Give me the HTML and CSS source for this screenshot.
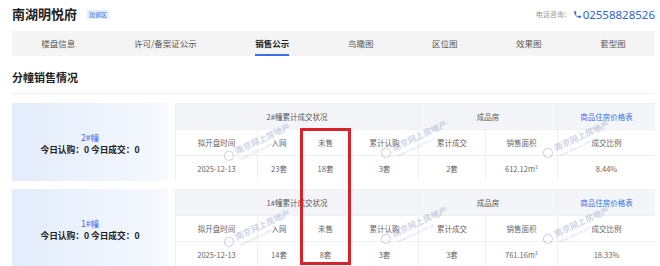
FILE: index.html
```html
<!DOCTYPE html>
<html lang="zh-CN">
<head>
  <meta charset="UTF-8">
  <meta name="viewport" content="width=device-width, initial-scale=1.0">
  <title>南湖明悦府 - 销售公示</title>
  <link rel="stylesheet" href="styles.css">
</head>
<body>
  <div class="page">
    <header class="top">
      <div class="name">
        <h1>南湖明悦府</h1>
        <span class="tag">建邺区</span>
      </div>
      <div class="phone">
        <span class="label">电话咨询：</span>
        <svg class="phone-icon" viewBox="0 0 24 24" width="9" height="9">
          <path d="M6.6 10.8c1.4 2.8 3.8 5.1 6.6 6.6l2.2-2.2c.3-.3.7-.4 1-.2 1.1.4 2.300.6 3.6.6.6 0 1 .4 1 1V20c0 .6-.4 1-1 1C10.6 21 3 13.4 3 4c0-.6.4-1 1-1h3.5c.6 0 1 .4 1 1 0 1.3.2 2.5.6 3.6.1.3 0 .7-.2 1l-2.3 2.2z" fill="#2f64d6"/>
        </svg>
        <span class="num">02558828526</span>
      </div>
    </header>

    <nav class="tabs">
      <a href="#">楼盘信息</a>
      <a href="#">许可/备案证公示</a>
      <a href="#" class="active">销售公示</a>
      <a href="#">鸟瞰图</a>
      <a href="#">区位图</a>
      <a href="#">效果图</a>
      <a href="#">套型图</a>
    </nav>

    <h2 class="section">分幢销售情况</h2>

    <div class="list">
      <!-- 2#幢 -->
      <div class="building">
        <div class="card">
          <div class="bname">2#幢</div>
          <div class="today">今日认购：0 今日成交：0</div>
        </div>
        <div class="stats-wrap">
          <table class="stats">
            <colgroup>
              <col style="width:82px"><col style="width:43px"><col style="width:50px"><col style="width:68px">
              <col style="width:67px"><col style="width:72px"><col style="width:98px">
            </colgroup>
            <tr class="head">
              <td colspan="4">2#幢累计成交状况</td>
              <td colspan="2">成品房</td>
              <td class="link">商品住房价格表</td>
            </tr>
            <tr>
              <td>拟开盘时间</td><td>入网</td><td>未售</td><td>累计认购</td>
              <td>累计成交</td><td>销售面积</td><td>成交比例</td>
            </tr>
            <tr>
              <td>2025-12-13</td><td>23套</td><td>18套</td><td>3套</td>
              <td>2套</td><td>612.12m²</td><td>8.44%</td>
            </tr>
          </table>
          <div class="mark m1"><i></i>南京网上房地产<small>www.njhouse.com.cn</small></div>
          <div class="mark m2"><i></i>南京网上房地产<small>www.njhouse.com.cn</small></div>
          <div class="mark m3"><i></i>南京网上房地产<small>www.njhouse.com.cn</small></div>
        </div>
      </div>

      <!-- 1#幢 -->
      <div class="building">
        <div class="card">
          <div class="bname">1#幢</div>
          <div class="today">今日认购：0 今日成交：0</div>
        </div>
        <div class="stats-wrap">
          <table class="stats">
            <colgroup>
              <col style="width:82px"><col style="width:43px"><col style="width:50px"><col style="width:68px">
              <col style="width:67px"><col style="width:72px"><col style="width:98px">
            </colgroup>
            <tr class="head">
              <td colspan="4">1#幢累计成交状况</td>
              <td colspan="2">成品房</td>
              <td class="link">商品住房价格表</td>
            </tr>
            <tr>
              <td>拟开盘时间</td><td>入网</td><td>未售</td><td>累计认购</td>
              <td>累计成交</td><td>销售面积</td><td>成交比例</td>
            </tr>
            <tr>
              <td>2025-12-13</td><td>14套</td><td>8套</td><td>3套</td>
              <td>3套</td><td>761.16m²</td><td>18.33%</td>
            </tr>
          </table>
          <div class="mark m1"><i></i>南京网上房地产<small>www.njhouse.com.cn</small></div>
          <div class="mark m2"><i></i>南京网上房地产<small>www.njhouse.com.cn</small></div>
          <div class="mark m3"><i></i>南京网上房地产<small>www.njhouse.com.cn</small></div>
        </div>
      </div>

      <div class="highlight"></div>
    </div>
  </div>
</body>
</html>
```

FILE: styles.css
```css
body {
  margin: 0;
  background: #fff;
  font-family: "Noto Sans CJK SC", "Noto Sans", sans-serif;
  color: #333;
  overflow: hidden;
}
.page {
  padding: 0 5px 0 12px;
}
.top {
  height: 28px;
  display: flex;
  align-items: center;
  justify-content: space-between;
  margin-bottom: 3px;
}
.name {
  display: flex;
  align-items: center;
}
h1 {
  margin: 0;
  font-size: 13px;
  font-weight: bold;
  color: #222;
  line-height: 18px;
}
.tag {
  margin-left: 10px;
  background: #e6eefc;
  color: #3f74e0;
  font-size: 6px;
  line-height: 9px;
  padding: 0 2px;
}
.phone {
  display: flex;
  align-items: center;
}
.phone .label {
  font-size: 7px;
  color: #999;
  margin-right: 2px;
}
.phone-icon {
  margin-right: 1px;
}
.phone .num {
  font-family: "Noto Sans", sans-serif;
  font-size: 11.5px;
  color: #2f64d6;
}
.tabs {
  height: 25px;
  background: #f4f4f4;
  display: flex;
  justify-content: space-around;
  align-items: center;
}
.tabs a {
  font-size: 8.5px;
  color: #555;
  text-decoration: none;
  line-height: 25px;
  position: relative;
}
.tabs a.active {
  color: #222;
  font-weight: bold;
}
.tabs a.active::after {
  content: "";
  position: absolute;
  left: 0;
  right: 0;
  bottom: 0;
  height: 2px;
  background: #3a6ee8;
}
.section {
  margin: 0;
  padding: 14px 0 8px;
  font-size: 11px;
  line-height: 15px;
  font-weight: bold;
  color: #222;
  border-bottom: 1px solid #f2f2f2;
}
.list {
  padding-top: 9px;
  position: relative;
}
.building {
  display: flex;
  gap: 7px;
  height: 78px;
  margin-bottom: 8px;
}
.card {
  width: 156px;
  flex: none;
  background: linear-gradient(to right, #e3ecfb, #f6f9fe);
  display: flex;
  flex-direction: column;
  align-items: center;
  justify-content: center;
  padding-top: 2px;
}
.bname {
  font-size: 8.5px;
  color: #3a6ee8;
  line-height: 12px;
}
.today {
  font-size: 8.7px;
  font-weight: bold;
  color: #222;
  line-height: 13px;
}
.stats-wrap {
  flex: 1;
  position: relative;
  overflow: hidden;
}
.stats {
  width: 480px;
  height: 78px;
  border-collapse: collapse;
  table-layout: fixed;
}
.stats td {
  border: 1px solid #eef0f3;
  text-align: center;
  font-size: 7.5px;
  color: #666;
  height: 25px;
  padding: 0;
  background: #fff;
}
.stats tr.head td {
  background: #f3f5f8;
  color: #555;
}
.stats tr.head td.link {
  color: #3a6ee8;
}
.mark {
  position: absolute;
  width: 84px;
  font-size: 8.5px;
  font-weight: bold;
  color: rgba(140, 158, 200, 0.45);
  transform: rotate(-25deg);
  white-space: nowrap;
  line-height: 10px;
  pointer-events: none;
}
.mark i {
  display: inline-block;
  width: 8px;
  height: 8px;
  border: 1px solid rgba(140, 158, 200, 0.5);
  border-radius: 50%;
  margin-right: 3px;
  vertical-align: middle;
}
.mark small {
  display: block;
  font-size: 4px;
  font-weight: normal;
  line-height: 5px;
  padding-left: 14px;
}
.mark.m1 { left: 46px; top: 30px; }
.mark.m2 { left: 203px; top: 27px; }
.mark.m3 { left: 365px; top: 27px; }
.highlight {
  position: absolute;
  left: 288px;
  top: 34px;
  width: 45px;
  height: 131px;
  border: 3px solid #d8232a;
}
```
